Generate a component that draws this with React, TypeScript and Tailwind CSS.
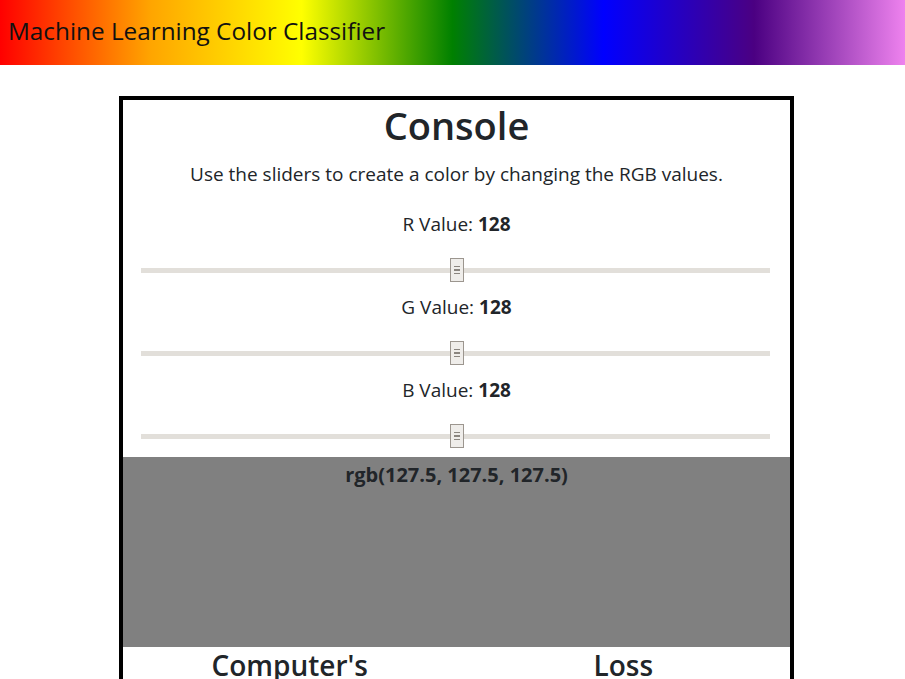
import React from "react";

function Slider({ label, value }: { label: string; value: number }) {
  const pct = (value / 255) * 100;
  return (
    <div className="flex flex-col items-center">
      <div className="text-[19px] leading-[27px]">
        {label} Value: <span className="font-bold">{value}</span>
      </div>
      <div className="relative mt-[20px] ml-[18px] mr-[20px] self-stretch h-[24px] flex items-center">
        <div className="h-[5px] w-full bg-[#e2dfda]" />
        <div
          className="absolute top-0 h-[24px] w-[14px] -ml-[7px] bg-[#efedea] border border-[#9c968f] flex flex-col items-center justify-center gap-[2px]"
          style={{ left: `${pct}%` }}
        >
          <div className="h-[1px] w-[6px] bg-[#8a857f]" />
          <div className="h-[2px] w-[6px] bg-[#8a857f]" />
          <div className="h-[1px] w-[6px] bg-[#8a857f]" />
        </div>
      </div>
    </div>
  );
}

export default function App() {
  return (
    <div className="min-h-screen bg-white font-['Open_Sans',sans-serif] text-[#212529]">
      <header className="h-[65px] flex items-center px-2 bg-[linear-gradient(to_right,red,orange,yellow,green,blue,indigo,violet)]">
        <h1 className="text-[24.3px] leading-[32px] text-[#111] -mt-[3px]">Machine Learning Color Classifier</h1>
      </header>
      <div className="ml-[119px] mt-[31px] w-[675px] border-4 border-black">
        <h2 className="text-center text-[38px] font-semibold leading-[48px] pt-[1px]">Console</h2>
        <p className="text-center text-[19px] leading-[27px] mt-[12px]">
          Use the sliders to create a color by changing the RGB values.
        </p>
        <div className="mt-[23px] flex flex-col gap-[12px]">
          <Slider label="R" value={128} />
          <Slider label="G" value={128} />
          <Slider label="B" value={128} />
        </div>
        <div className="mt-[9px] h-[190px] bg-[#808080]">
          <p className="text-center text-[20px] font-bold leading-[27px] pt-[4px]">
            rgb(127.5, 127.5, 127.5)
          </p>
        </div>
        <div className="grid grid-cols-2 text-center text-[28px] font-semibold leading-[36px]">
          <div>
            Computer's
            <br />
            Guess
          </div>
          <div>Loss</div>
        </div>
      </div>
    </div>
  );
}
